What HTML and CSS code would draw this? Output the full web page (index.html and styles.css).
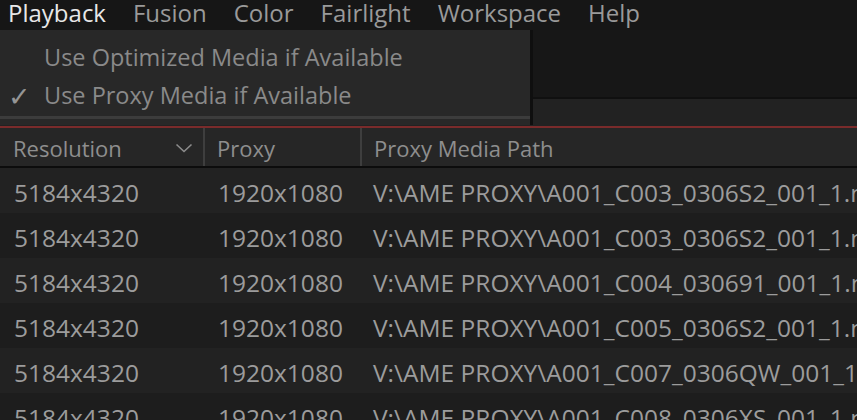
FILE: index.html
```html
<!DOCTYPE html>
<html lang="en">
<head>
  <meta charset="UTF-8">
  <title>Proxy media</title>
  <link rel="stylesheet" href="styles.css">
</head>
<body>
  <div class="menubar">
    <span class="menuItem active">Playback</span>
    <span class="menuItem">Fusion</span>
    <span class="menuItem">Color</span>
    <span class="menuItem">Fairlight</span>
    <span class="menuItem">Workspace</span>
    <span class="menuItem">Help</span>
  </div>

  <div class="toolArea">
    <div class="toolTop"></div>
    <div class="toolBar"></div>

    <!-- menu aberto -->
    <div class="dropdown">
      <div class="dropItem"><span class="check"></span>Use Optimized Media if Available</div>
      <div class="dropItem"><span class="check">&#10003;</span>Use Proxy Media if Available</div>
      <div class="dropSep"></div>
    </div>
  </div>

  <div class="redLine"></div>

  <div class="tabela">
    <div class="linha cabecalho">
      <div class="col c1">Resolution <svg class="chevron" width="18" height="10" viewBox="0 0 18 10"><path d="M1.5 1.5 L9 8.5 L16.5 1.5" fill="none" stroke="#8c8c8c" stroke-width="1.6"/></svg></div>
      <div class="col c2">Proxy</div>
      <div class="col c3">Proxy Media Path</div>
    </div>
    <div class="linha">
      <div class="col c1">5184x4320</div>
      <div class="col c2">1920x1080</div>
      <div class="col c3">V:\AME PROXY\A001_C003_0306S2_001_1.mov</div>
    </div>
    <div class="linha">
      <div class="col c1">5184x4320</div>
      <div class="col c2">1920x1080</div>
      <div class="col c3">V:\AME PROXY\A001_C003_0306S2_001_1.mov</div>
    </div>
    <div class="linha">
      <div class="col c1">5184x4320</div>
      <div class="col c2">1920x1080</div>
      <div class="col c3">V:\AME PROXY\A001_C004_030691_001_1.mov</div>
    </div>
    <div class="linha">
      <div class="col c1">5184x4320</div>
      <div class="col c2">1920x1080</div>
      <div class="col c3">V:\AME PROXY\A001_C005_0306S2_001_1.mov</div>
    </div>
    <div class="linha">
      <div class="col c1">5184x4320</div>
      <div class="col c2">1920x1080</div>
      <div class="col c3">V:\AME PROXY\A001_C007_0306QW_001_1.mov</div>
    </div>
    <div class="linha">
      <div class="col c1">5184x4320</div>
      <div class="col c2">1920x1080</div>
      <div class="col c3">V:\AME PROXY\A001_C008_0306XS_001_1.mov</div>
    </div>
  </div>
</body>
</html>
```

FILE: styles.css
```css
body {
    margin: 0;
    background: #1e1e1e;
    font-family: "Open Sans", "DejaVu Sans", sans-serif;
    overflow: hidden;
}
.menubar {
    display: flex;
    height: 30px;
    box-sizing: border-box;
    padding: 0 0 3px 8px;
    align-items: center;
    background: #161616;
}
.menuItem {
    font-size: 24px;
    line-height: 1.1;
    color: #9a9a9a;
    margin-right: 27px;
}
.menuItem.active { color: #e8e8e8; }
.toolArea {
    position: relative;
    height: 96px;
}
.toolTop {
    height: 67px;
    background: #171717;
    border-bottom: 2px solid #101010;
}
.toolBar {
    height: 27px;
    background: #222222;
}
.dropdown {
    position: absolute;
    left: 0;
    top: 0;
    width: 533px;
    height: 95px;
    background: #282828;
    border-right: 3px solid #0f0f0f;
    padding-top: 8px;
    box-sizing: border-box;
}
.dropItem {
    display: flex;
    align-items: center;
    height: 38px;
    font-size: 23.5px;
    color: #8a8a8a;
}
.check {
    display: inline-block;
    width: 44px;
    padding-left: 8px;
    font-size: 27px;
    color: #959595;
    box-sizing: border-box;
}
.dropSep {
    height: 3px;
    background: #3c3c3c;
    margin-top: 2px;
}
.redLine {
    height: 2px;
    background: #7a2b2b;
}
.tabela { width: 100%; }
.linha {
    display: flex;
    height: 45px;
    align-items: center;
    font-size: 24.5px;
    color: #9c9c9c;
    white-space: nowrap;
}
.linha:nth-child(odd) { background: #1d1d1d; }
.linha:nth-child(even) { background: #222222; }
.linha.cabecalho {
    height: 38px;
    background: #262626;
    border-bottom: 2px solid #0c0c0c;
    color: #8e8e8e;
    font-size: 22px;
}
.col {
    overflow: hidden;
    box-sizing: border-box;
    height: 100%;
    display: flex;
    align-items: center;
    padding-top: 3px;
}
.c1 { width: 203px; padding-left: 14px; }
.c2 { width: 157px; padding-left: 15px; }
.c3 { flex: 1; padding-left: 13px; }
.cabecalho .col { padding-top: 1px; }
.cabecalho .c1 { padding-left: 13px; }
.cabecalho .c2,
.cabecalho .c3 { border-left: 2px solid #3e3e3e; padding-left: 12px; }
.chevron { margin-left: auto; margin-right: 10px; }
```
